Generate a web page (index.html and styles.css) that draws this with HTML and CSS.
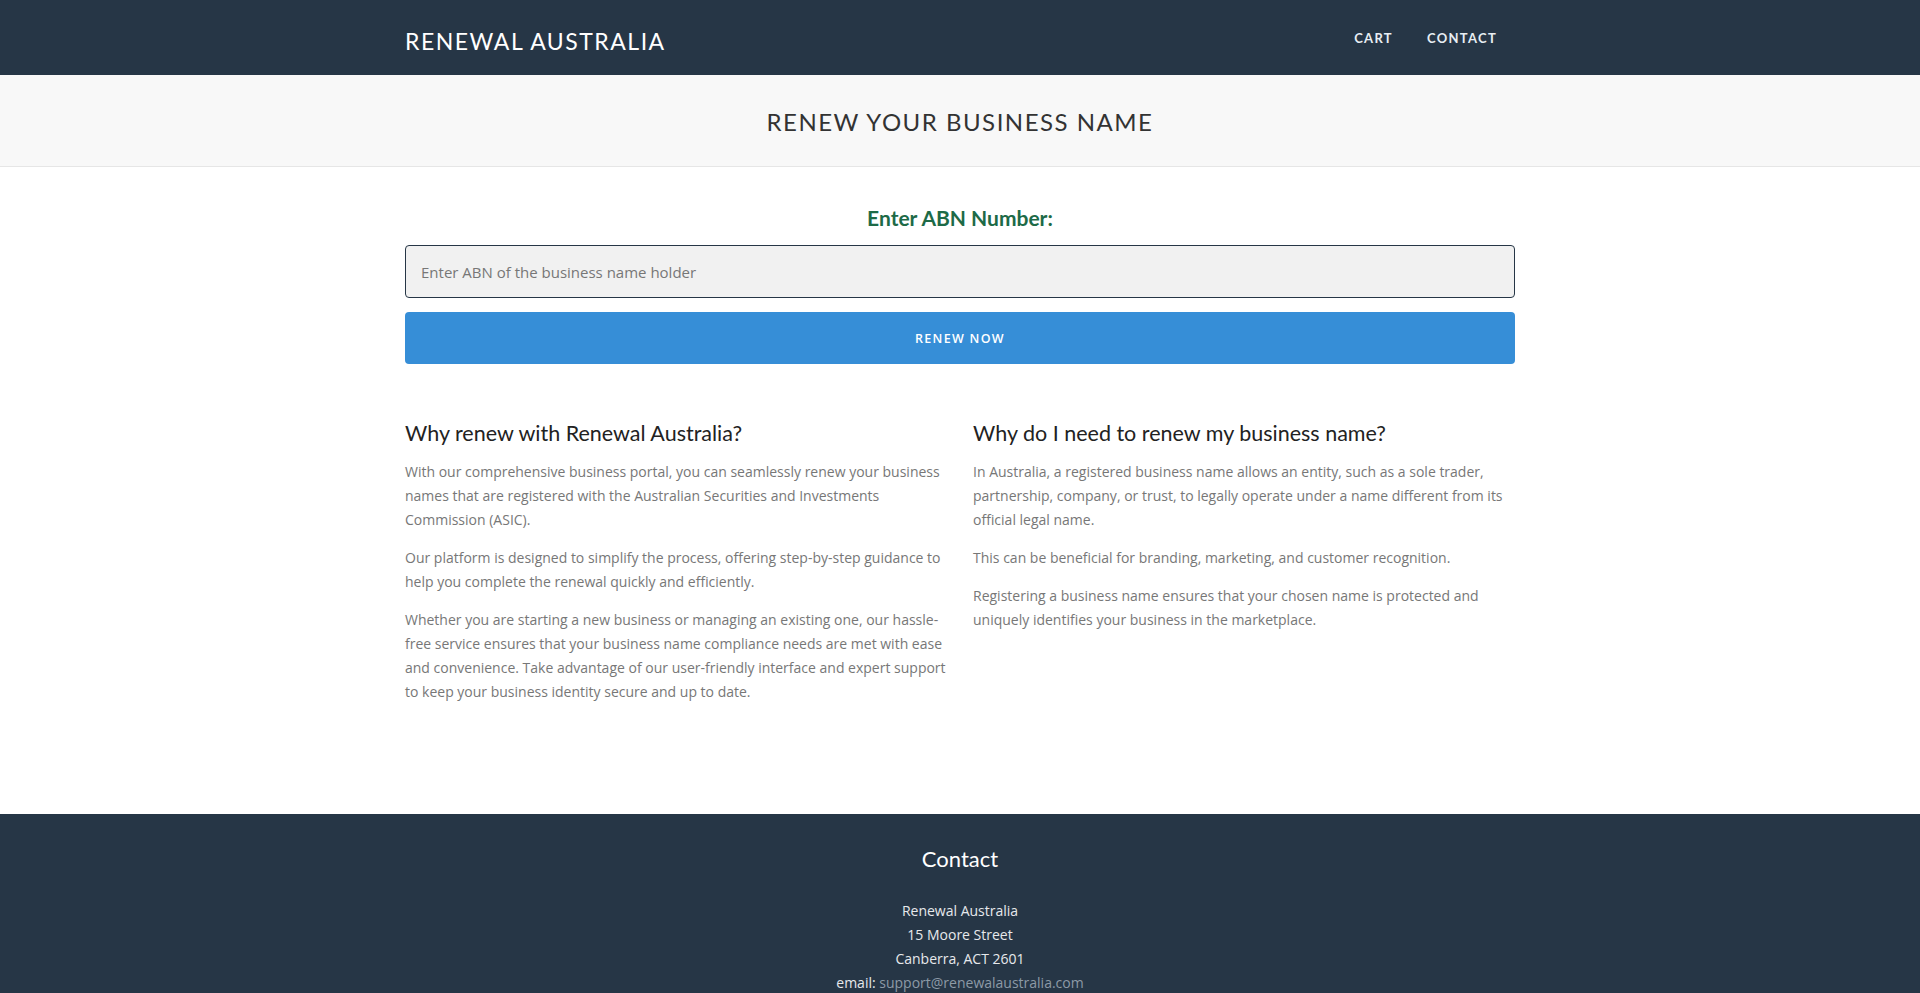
FILE: index.html
```html
<!DOCTYPE html>
<html lang="en">
<head>
  <meta charset="UTF-8">
  <title>Renewal Australia - Renew Your Business Name</title>
  <link rel="stylesheet" href="styles.css">
</head>
<body>
  <nav class="navbar">
    <div class="container nav-inner">
      <a class="brand" href="#">Renewal Australia</a>
      <ul class="nav-links">
        <li><a href="#">Cart</a></li>
        <li><a href="#">Contact</a></li>
      </ul>
    </div>
  </nav>

  <header class="page-header">
    <h1>Renew Your Business Name</h1>
  </header>

  <main class="container main">
    <form class="abn-form" onsubmit="return false;">
      <label for="abn">Enter ABN Number:</label>
      <input type="text" id="abn" placeholder="Enter ABN of the business name holder">
      <button type="submit">Renew Now</button>
    </form>

    <div class="info">
      <div class="info-col">
        <h3>Why renew with Renewal Australia?</h3>
        <p>With our comprehensive business portal, you can seamlessly renew your business names that are registered with the Australian Securities and Investments Commission (ASIC).</p>
        <p>Our platform is designed to simplify the process, offering step-by-step guidance to help you complete the renewal quickly and efficiently.</p>
        <p>Whether you are starting a new business or managing an existing one, our hassle-free service ensures that your business name compliance needs are met with ease and convenience. Take advantage of our user-friendly interface and expert support to keep your business identity secure and up to date.</p>
      </div>
      <div class="info-col">
        <h3>Why do I need to renew my business name?</h3>
        <p>In Australia, a registered business name allows an entity, such as a sole trader, partnership, company, or trust, to legally operate under a name different from its official legal name.</p>
        <p>This can be beneficial for branding, marketing, and customer recognition.</p>
        <p>Registering a business name ensures that your chosen name is protected and uniquely identifies your business in the marketplace.</p>
      </div>
    </div>
  </main>

  <footer class="footer">
    <h3>Contact</h3>
    <p>
      Renewal Australia<br>
      15 Moore Street<br>
      Canberra, ACT 2601<br>
      email: <a href="#">support@renewalaustralia.com</a>
    </p>
  </footer>
</body>
</html>
```

FILE: styles.css
```css
body {
  font-family: 'Open Sans', sans-serif;
  font-size: 14px;
  line-height: 24px;
  color: #777;
  background-color: #fff;
  margin: 0;
  padding: 0;
}

a {
  text-decoration: none;
}

.container {
  width: 1110px;
  margin: 0 auto;
}

/* top bar */
.navbar {
  background-color: #263646;
  height: 75px;
}

.nav-inner {
  display: flex;
  justify-content: space-between;
  align-items: center;
  height: 100%;
}

.brand {
  font-family: 'Lato', sans-serif;
  font-size: 23px;
  letter-spacing: 1.5px;
  text-transform: uppercase;
  color: #fff;
  padding-top: 6px;
}

.nav-links {
  list-style: none;
  display: flex;
  gap: 34px;
  margin: 0;
  padding: 0 18px 0 0;
}

.nav-links a {
  font-family: 'Lato', sans-serif;
  font-size: 13px;
  font-weight: 700;
  letter-spacing: 1.3px;
  text-transform: uppercase;
  color: #e8eef3;
}

/* page title band */
.page-header {
  background-color: #f8f8f8;
  border-bottom: 1px solid #e6e6e6;
  height: 91px;
  display: flex;
  align-items: center;
  justify-content: center;
}

.page-header h1 {
  font-family: 'Lato', sans-serif;
  font-weight: 400;
  font-size: 24px;
  letter-spacing: 1.5px;
  text-transform: uppercase;
  color: #333;
  margin: 2px 0 0;
}

/* ABN form */
.main {
  padding-top: 36px;
  padding-bottom: 96px;
}

.abn-form {
  display: flex;
  flex-direction: column;
}

.abn-form label {
  font-family: 'Lato', sans-serif;
  font-weight: 700;
  font-size: 21px;
  color: #1d6a47;
  text-align: center;
  line-height: 30px;
  margin-bottom: 12px;
}

.abn-form input {
  height: 53px;
  box-sizing: border-box;
  background-color: #f1f1f1;
  border: 1px solid #263646;
  border-radius: 4px;
  padding: 0 15px;
  font-family: 'Open Sans', sans-serif;
  font-size: 15px;
  color: #555;
}

.abn-form input::placeholder {
  color: #777;
}

.abn-form button {
  margin-top: 14px;
  height: 52px;
  background-color: #368ed7;
  color: #fff;
  border: none;
  border-radius: 4px;
  font-family: 'Open Sans', sans-serif;
  font-size: 12.5px;
  font-weight: 600;
  letter-spacing: 1.3px;
  text-transform: uppercase;
  cursor: pointer;
}

/* two info columns */
.info {
  display: grid;
  grid-template-columns: 1fr 1fr;
  gap: 26px;
  margin-top: 54px;
}

.info h3 {
  font-family: 'Lato', sans-serif;
  font-weight: 400;
  font-size: 21.5px;
  line-height: 30px;
  color: #222;
  margin: 0 0 12px;
}

.info p {
  margin: 0 0 14px;
}

/* footer */
.footer {
  background-color: #263646;
  text-align: center;
  padding: 30px 0 10px;
  color: #e6e9ec;
}

.footer h3 {
  font-family: 'Lato', sans-serif;
  font-weight: 400;
  font-size: 22px;
  line-height: 30px;
  color: #fff;
  margin: 0 0 25px;
}

.footer p {
  margin: 0;
}

.footer a {
  color: #8d9aa6;
}
```
